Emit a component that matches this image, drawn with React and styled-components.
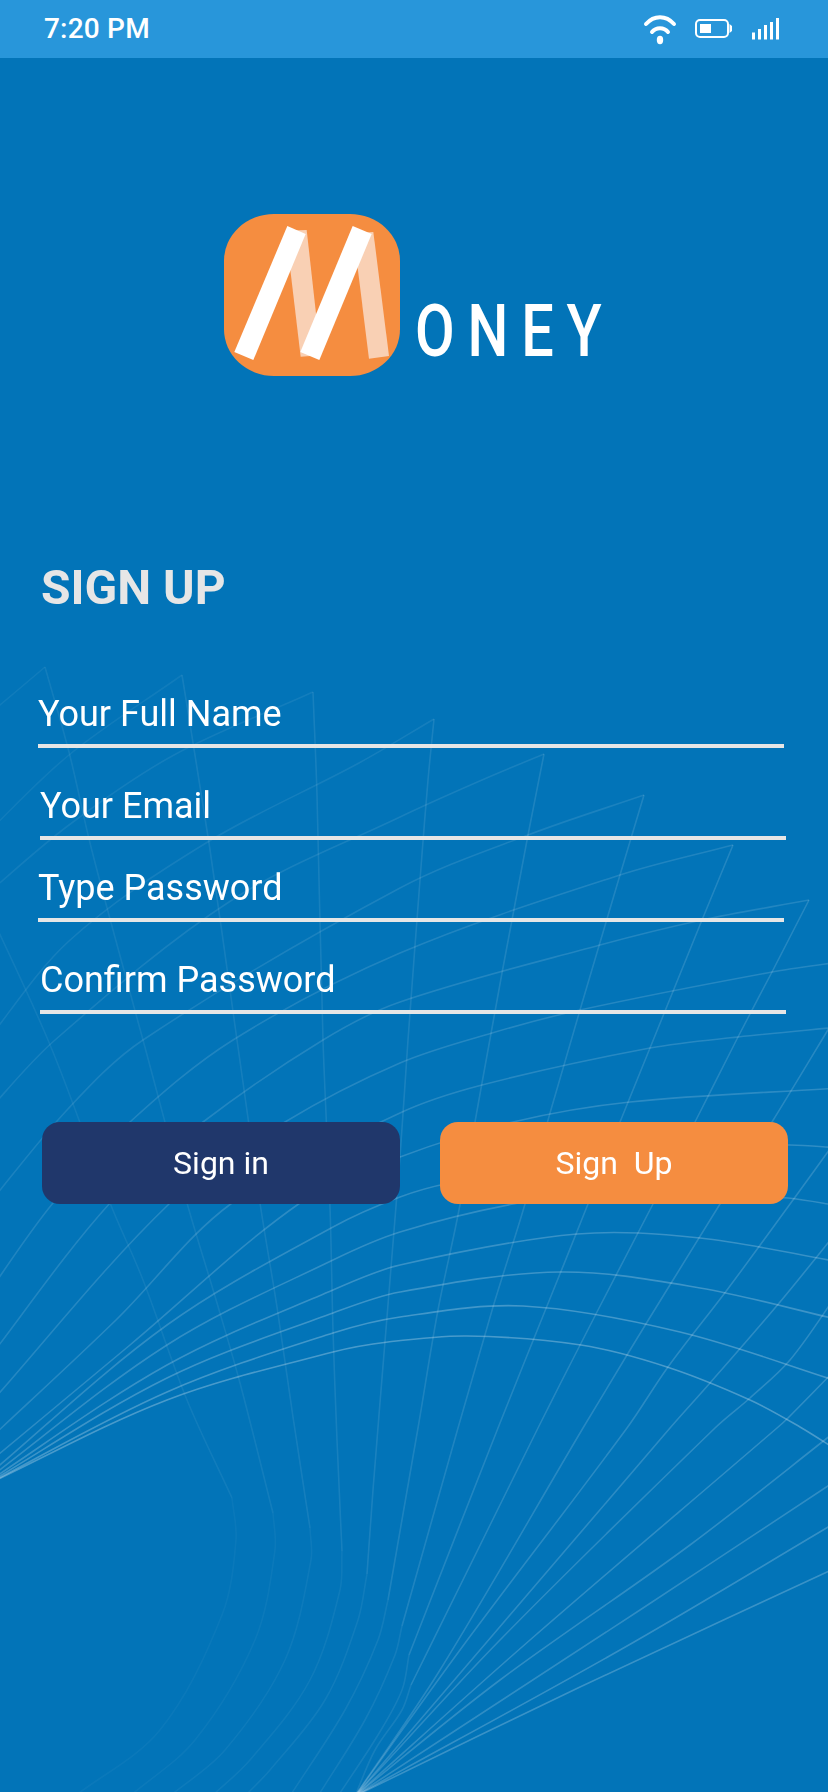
import styled, { createGlobalStyle } from 'styled-components';

const GlobalStyle = createGlobalStyle`
    html, body {
        margin: 0;
        padding: 0;
        background: #0274b8;
    }
    * {
        box-sizing: border-box;
    }
`;

const Screen = styled.div`
    position: relative;
    width: 828px;
    height: 1792px;
    overflow: hidden;
    background: #0274b8;
    font-family: Roboto, "Liberation Sans", sans-serif;
    color: #fff;
`;

const Mesh = styled.svg`
    position: absolute;
    left: 0;
    top: 0;
    width: 828px;
    height: 1792px;
`;

const Content = styled.div`
    position: relative;
    display: flex;
    flex-direction: column;
`;

const StatusBar = styled.div`
    display: flex;
    align-items: center;
    justify-content: space-between;
    height: 58px;
    padding: 0 49px 0 44px;
    background: #2896da;
`;

const Time = styled.div`
    font-size: 28px;
    font-weight: 500;
    line-height: 58px;
    letter-spacing: 0.2px;
`;

const StatusIcons = styled.div`
    display: flex;
    align-items: center;
`;

const Brand = styled.div`
    display: flex;
    align-items: flex-end;
    height: 162px;
    margin: 156px 0 0 224px;
`;

const LogoMark = styled.svg`
    width: 176px;
    height: 162px;
    flex: none;
`;

const Wordmark = styled.div`
    width: 190px;
    margin: 0 0 14px 15px;
    font-size: 72px;
    font-weight: 500;
    line-height: 60px;
    letter-spacing: 16px;
    white-space: nowrap;
    transform: scaleX(0.8);
    transform-origin: left bottom;
`;

const Title = styled.h1`
    margin: 184px 0 0 41px;
    font-size: 48px;
    font-weight: 700;
    line-height: 56px;
    color: #e6e6e6;
`;

const Fields = styled.div`
    display: flex;
    flex-direction: column;
`;

const Field = styled.label`
    display: flex;
    align-items: flex-end;
    width: 746px;
    height: ${({ $height }) => $height}px;
    margin-left: ${({ $left }) => $left}px;
    padding-bottom: 9px;
    border-bottom: 4px solid #e6e6e6;
    font-size: 36px;
    line-height: 42px;
`;

const Buttons = styled.div`
    display: flex;
    gap: 40px;
    margin: 108px 0 0 42px;
`;

const Button = styled.button`
    width: ${({ $width }) => $width}px;
    height: 82px;
    padding: 0;
    border: 0;
    border-radius: 18px;
    background: ${({ $bg }) => $bg};
    font-family: inherit;
    font-size: 32px;
    color: #fff;
    white-space: pre;
`;

// smooth line through the points, handle length follows the segment so long and short runs don't kink
const smooth = (pts) => {
    const tangent = (i) => {
        const a = pts[i - 1] || pts[i];
        const b = pts[i + 1] || pts[i];
        const len = Math.hypot(b[0] - a[0], b[1] - a[1]) || 1;
        return [(b[0] - a[0]) / len, (b[1] - a[1]) / len];
    };
    let d = `M${pts[0][0]} ${pts[0][1]}`;
    for (let i = 0; i < pts.length - 1; i++) {
        const p1 = pts[i];
        const p2 = pts[i + 1];
        const seg = Math.hypot(p2[0] - p1[0], p2[1] - p1[1]) / 3;
        const t1 = tangent(i);
        const t2 = tangent(i + 1);
        const c1 = [p1[0] + t1[0] * seg, p1[1] + t1[1] * seg];
        const c2 = [p2[0] - t2[0] * seg, p2[1] - t2[1] * seg];
        d += ` C${c1[0].toFixed(1)} ${c1[1].toFixed(1)} ${c2[0].toFixed(1)} ${c2[1].toFixed(1)} ${p2[0]} ${p2[1]}`;
    }
    return d;
};

const BOTTOM = [355, 1796];

// curves fanning out of the left edge, up to their tips
const arcs = [
    { o: 0.28, pts: [[-20, 1488], [167, 1400], [333, 1352], [388, 1342], [467, 1336], [581, 1345], [667, 1367], [750, 1400], [800, 1427], [840, 1452]] },
    { o: 0.25, pts: [[-20, 1488], [167, 1392], [333, 1333], [400, 1317], [523, 1306], [680, 1332], [840, 1382]] },
    { o: 0.23, pts: [[-20, 1488], [167, 1378], [333, 1313], [400, 1292], [560, 1272], [700, 1288], [840, 1320]] },
    { o: 0.21, pts: [[-20, 1487], [167, 1365], [333, 1290], [400, 1265], [577, 1234], [700, 1238], [840, 1262]] },
    { o: 0.19, pts: [[-20, 1485], [167, 1345], [333, 1260], [400, 1232], [513, 1204], [640, 1187], [788, 1198], [840, 1206]] },
    { o: 0.18, pts: [[-20, 1482], [167, 1325], [333, 1227], [400, 1197], [450, 1183], [640, 1150], [788, 1145], [840, 1148]] },
    { o: 0.17, pts: [[-20, 1470], [130, 1345], [300, 1203], [400, 1157], [513, 1122], [630, 1102], [840, 1088]] },
    { o: 0.15, pts: [[-20, 1448], [116, 1320], [232, 1203], [400, 1113], [482, 1085], [650, 1048], [738, 1037], [840, 1027]] },
    { o: 0.14, pts: [[-20, 1415], [170, 1203], [285, 1122], [400, 1063], [492, 1033], [580, 1010], [772, 972], [840, 962]] },
    { o: 0.13, pts: [[-20, 1370], [110, 1203], [203, 1122], [323, 1040], [400, 1002], [600, 945], [702, 920], [809, 900]] },
    { o: 0.12, pts: [[-20, 1305], [53, 1203], [130, 1122], [233, 1040], [400, 953], [620, 875], [733, 845]] },
    { o: 0.1, pts: [[-20, 1215], [67, 1110], [143, 1040], [400, 888], [528, 835], [644, 795]] },
    { o: 0.09, pts: [[-20, 1120], [55, 1040], [232, 900], [400, 817], [482, 780], [544, 754]] },
    { o: 0.08, pts: [[-20, 1050], [69, 941], [206, 843], [359, 763], [434, 719]] },
    { o: 0.07, pts: [[-20, 900], [69, 825], [174, 755], [313, 692]] },
    { o: 0.06, pts: [[-20, 840], [69, 755], [182, 675]] },
    { o: 0.06, pts: [[-20, 722], [45, 667]] },
];

// lines coming down from the tips, they bend at a kink and die out towards the bottom
const spokes = [
    { o: 0.06, pts: [[-40, 850], [48, 1040], [110, 1203], [143, 1280], [187, 1400], [232, 1498]], tail: [[236, 1540], [222, 1615], [160, 1730], [75, 1796]] },
    { o: 0.07, pts: [[45, 667], [69, 752], [90, 843], [116, 941], [143, 1040], [187, 1203], [217, 1303], [240, 1383], [273, 1513]], tail: [[275, 1550], [255, 1640], [195, 1740], [130, 1796]] },
    { o: 0.08, pts: [[182, 675], [209, 843], [237, 1040], [260, 1203], [277, 1307], [293, 1417], [310, 1528]], tail: [[311, 1560], [285, 1660], [225, 1750], [170, 1796]] },
    { o: 0.09, pts: [[313, 692], [317, 795], [323, 1040], [330, 1207], [333, 1330], [337, 1440], [342, 1551]], tail: [[340, 1590], [310, 1680], [250, 1760], [212, 1796]] },
    { o: 0.1, pts: [[434, 719], [428, 780], [420, 880], [408, 1040], [400, 1157], [387, 1317], [373, 1490], [367, 1574]], tail: [[358, 1620], [325, 1700], [270, 1770], [245, 1796]] },
    { o: 0.11, pts: [[544, 754], [528, 835], [502, 973], [482, 1083], [458, 1215], [438, 1310], [418, 1428], [388, 1600]], tail: [[378, 1640], [345, 1710], [290, 1796]] },
    { o: 0.12, pts: [[644, 795], [620, 875], [580, 1010], [550, 1113], [525, 1204], [493, 1307], [458, 1428], [402, 1626]], tail: [[395, 1655], [365, 1720], [318, 1796]] },
    { o: 0.13, pts: [[733, 845], [702, 920], [650, 1048], [620, 1122], [588, 1204], [547, 1306], [498, 1428], [409, 1655]], tail: [[402, 1690], [378, 1735], [338, 1796]] },
    { o: 0.14, pts: [[809, 900], [772, 972], [738, 1037], [695, 1122], [653, 1204], [598, 1310], [538, 1428], [411, 1685]], tail: [[402, 1710], [375, 1750], BOTTOM] },
    { o: 0.15, pts: [[840, 1010], [772, 1122], [720, 1204], [673, 1280], [627, 1355], [583, 1428], [440, 1670], BOTTOM] },
    { o: 0.16, pts: [[840, 1135], [793, 1200], [727, 1290], [668, 1367], [627, 1428], [460, 1650], BOTTOM] },
    { o: 0.17, pts: [[840, 1228], [780, 1302], [710, 1383], [670, 1428], [480, 1650], BOTTOM] },
    { o: 0.17, pts: [[840, 1290], [790, 1360], [750, 1398], [715, 1428], [500, 1640], BOTTOM] },
    { o: 0.18, pts: [[840, 1365], [788, 1418], [777, 1428], [530, 1640], BOTTOM] },
    { o: 0.18, pts: [[840, 1428], [690, 1545], [500, 1680], BOTTOM] },
    { o: 0.18, pts: [[840, 1478], [640, 1610], BOTTOM] },
    { o: 0.2, pts: [[840, 1520], [620, 1650], BOTTOM] },
    { o: 0.22, pts: [[840, 1566], [580, 1687], BOTTOM] },
];

const fields = [
    { label: 'Your Full Name', left: 38, height: 132 },
    { label: 'Your Email', left: 40, height: 92 },
    { label: 'Type Password', left: 38, height: 82 },
    { label: 'Confirm Password', left: 40, height: 92 },
];

export default function App() {
    return (
        <Screen>
            <GlobalStyle />
            <Mesh viewBox="0 0 828 1792" fill="none" stroke="#fff" strokeWidth="1.6">
                {arcs.map((a, i) => (
                    <path key={i} d={smooth(a.pts)} opacity={a.o} />
                ))}
                {spokes.map((s, i) => (
                    <g key={i} opacity={s.o}>
                        <path d={smooth(s.pts)} />
                        {s.tail && <path d={smooth([s.pts[s.pts.length - 1], ...s.tail])} opacity="0.6" />}
                    </g>
                ))}
            </Mesh>
            <Content>
                <StatusBar>
                    <Time>7:20 PM</Time>
                    <StatusIcons>
                        <svg width="34" height="32" viewBox="0 0 34 32" fill="none" stroke="#fff" strokeWidth="4" strokeLinecap="round">
                            <path d="M3 11 C11 2 23 2 31 11" />
                            <path d="M9 19 C13 14 21 14 25 19" />
                            <ellipse cx="17" cy="27" rx="3.2" ry="4.2" fill="#fff" stroke="none" />
                        </svg>
                        <svg width="37" height="20" viewBox="0 0 37 20" fill="none" style={{ marginLeft: 18 }}>
                            <rect x="1" y="1" width="32" height="17" rx="4" stroke="#fff" strokeWidth="2" />
                            <rect x="5" y="5" width="11" height="9" fill="#fff" />
                            <path d="M34.5 5 L37 7 V12 L34.5 14 Z" fill="#fff" />
                        </svg>
                        <svg width="27" height="22" viewBox="0 0 27 22" fill="#fff" style={{ marginLeft: 20 }}>
                            <rect x="0" y="14.5" width="3" height="7" />
                            <rect x="6" y="11" width="3" height="10.5" />
                            <rect x="12" y="7" width="3" height="14.5" />
                            <rect x="18" y="4" width="3" height="17.5" />
                            <rect x="24" y="0" width="3" height="21.5" />
                        </svg>
                    </StatusIcons>
                </StatusBar>
                <Brand>
                    <LogoMark viewBox="42 42 528 486">
                        <rect x="42" y="42" width="528" height="486" rx="150" ry="140" fill="#f58d40" />
                        <polygon points="227,92 290,90 332,466 272,470" fill="#f9d0b4" />
                        <polygon points="430,100 490,96 537,468 477,476" fill="#f9d0b4" />
                        <polygon points="232,78 287,102 130,480 73,456" fill="#fff" />
                        <polygon points="428,78 485,102 328,480 271,456" fill="#fff" />
                    </LogoMark>
                    <Wordmark>ONEY</Wordmark>
                </Brand>
                <Title>SIGN UP</Title>
                <Fields>
                    {fields.map((f) => (
                        <Field key={f.label} $left={f.left} $height={f.height}>
                            {f.label}
                        </Field>
                    ))}
                </Fields>
                <Buttons>
                    <Button $width={358} $bg="#20376b">Sign in</Button>
                    <Button $width={348} $bg="#f58d40">{'Sign  Up'}</Button>
                </Buttons>
            </Content>
        </Screen>
    );
}
